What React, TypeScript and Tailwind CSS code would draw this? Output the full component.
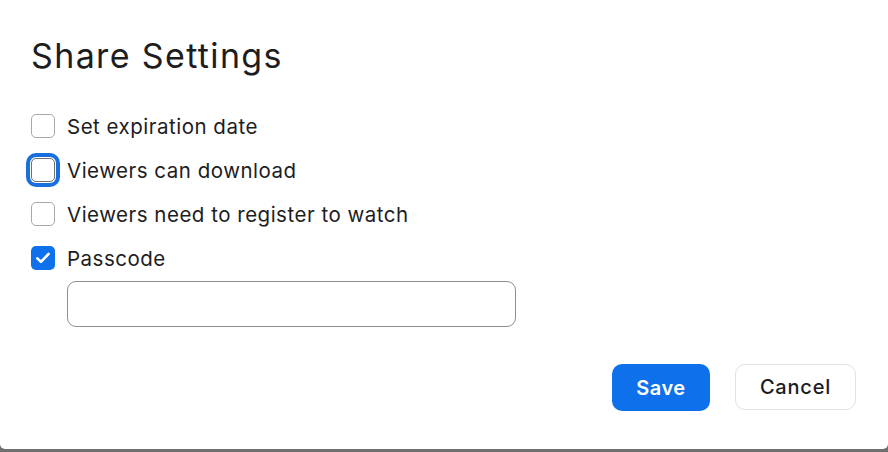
const options = [
  { label: "Set expiration date", checked: false, focused: false },
  { label: "Viewers can download", checked: false, focused: true },
  { label: "Viewers need to register to watch", checked: false, focused: false },
  { label: "Passcode", checked: true, focused: false },
];

function Box({ checked, focused }: { checked: boolean; focused: boolean }) {
  if (checked) {
    return (
      <span className="w-[24px] h-[24px] rounded-[5px] bg-[#0e71eb] flex">
        <svg width="24" height="24" viewBox="0 0 24 24" fill="none">
          <path d="M6.3 12.4l3.6 3.4 7.6-7.8" stroke="white" strokeWidth="2.6" strokeLinecap="round" strokeLinejoin="round" />
        </svg>
      </span>
    );
  }
  return (
    <span
      className={
        focused
          ? "w-[24px] h-[24px] rounded-[5px] border border-[#6e6e73] bg-white shadow-[0_0_0_1px_#ffffff,0_0_0_5px_#1a6fdf]"
          : "w-[24px] h-[24px] rounded-[5px] border border-[#a8a8ad] bg-white"
      }
    />
  );
}

export default function App() {
  return (
    <div className="w-[888px] h-[452px] bg-[#6f6f6f] font-['Inter',sans-serif] text-[#1d1d1f]">
      <div className="h-[449px] bg-white rounded-b-[5px] pl-[31px] pr-[32px] pt-[36px]">
        <h1 className="text-[34px] leading-[40px] font-normal tracking-[0.04em]">Share Settings</h1>

        <div className="mt-[28px]">
          {options.map((o) => (
            <div key={o.label} className="h-[44px] flex items-center gap-[12px]">
              <Box checked={o.checked} focused={o.focused} />
              <span className="text-[20.5px] leading-[24px] tracking-[0.5px] pt-[1px]">{o.label}</span>
            </div>
          ))}
        </div>

        <div className="pl-[36px] mt-[1px]">
          <input
            type="text"
            className="w-[449px] h-[46px] rounded-[9px] border border-[#8e8e93] bg-white px-3 text-[18px] outline-none"
          />
        </div>

        <div className="mt-[37px] flex justify-end gap-[25px]">
          <button className="w-[98px] h-[47px] rounded-[10px] bg-[#0e71eb] text-white text-[20px] font-semibold tracking-[0.5px]">
            Save
          </button>
          <button className="w-[121px] h-[46px] rounded-[10px] border border-[#e2e2e4] bg-white text-[20px] font-medium tracking-[0.8px]">
            Cancel
          </button>
        </div>
      </div>
    </div>
  );
}
